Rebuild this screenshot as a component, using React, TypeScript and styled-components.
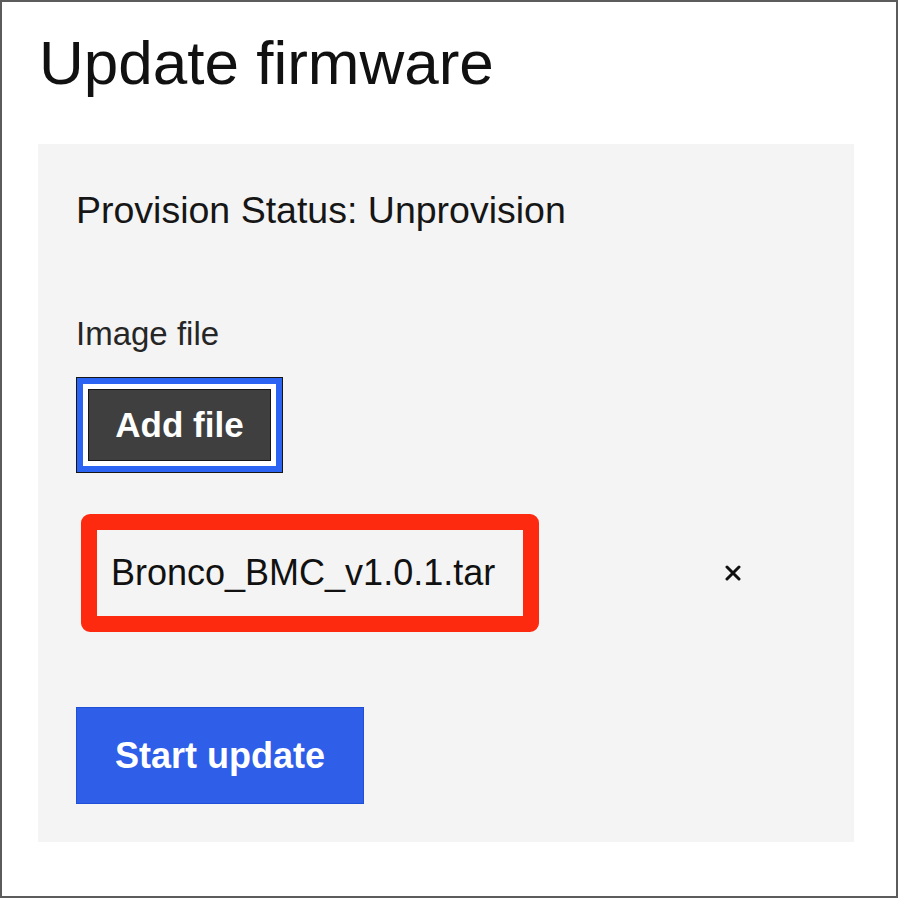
import React from "react";
import styled, { createGlobalStyle } from "styled-components";

const Global = createGlobalStyle`
  html, body { margin: 0; padding: 0; background: #ffffff; }
  body { font-family: "Liberation Sans", Arial, sans-serif; }
  * { box-sizing: border-box; }
`;

const Frame = styled.div`
  width: 898px;
  height: 898px;
  border: 2px solid #5c5c5c;
  background: #ffffff;
  padding: 30px 42px 0 36px;
`;

const Title = styled.h1`
  margin: 0 0 50px 1px;
  font-size: 62px;
  line-height: 62px;
  font-weight: 400;
  color: #111111;
`;

const Panel = styled.section`
  background: #f4f4f4;
  padding: 47px 38px 38px 38px;
`;

const Status = styled.p`
  margin: 0 0 88px 0;
  font-size: 37.5px;
  line-height: 38px;
  color: #161616;
`;

const Label = styled.label`
  display: block;
  margin: 0;
  font-size: 33px;
  line-height: 33px;
  color: #262626;
`;

const FocusRing = styled.span`
  display: flex;
  width: fit-content;
  margin: 28px 0 0 1px;
  border: 6px solid #2b63f3;
  outline: 1px solid #151515;
  padding: 5px;
  background: #ffffff;
`;

const AddButton = styled.button`
  height: 72px;
  width: 183px;
  padding: 0;
  border: 1px solid #151515;
  background: #3f3f3f;
  color: #ffffff;
  font-family: "Liberation Sans", Arial, sans-serif;
  font-weight: 700;
  font-size: 35px;
  cursor: pointer;
`;

const FileRow = styled.div`
  display: flex;
  align-items: center;
  width: 660px;
  margin: 42px 0 0 5px;
`;

const FileBox = styled.div`
  display: flex;
  align-items: center;
  width: 458px;
  height: 118px;
  border: 16px solid #fd2a0f;
  border-radius: 9px;
  padding: 0 14px;
  font-size: 36px;
  color: #111111;
`;

const Remove = styled.button`
  margin-left: auto;
  padding: 0;
  border: 0;
  background: transparent;
  display: flex;
  cursor: pointer;
`;

const StartButton = styled.button`
  display: block;
  margin-top: 75px;
  width: 288px;
  height: 97px;
  border: 1px solid #1f4fd6;
  background: #2f5ee8;
  color: #ffffff;
  font-family: "Liberation Sans", Arial, sans-serif;
  font-weight: 700;
  font-size: 36px;
  padding: 0;
  cursor: pointer;
`;

export default function App() {
  return (
    <>
      <Global />
      <Frame>
        <Title>Update firmware</Title>
        <Panel>
          <Status>Provision Status: Unprovision</Status>
          <Label>Image file</Label>
          <FocusRing>
            <AddButton>Add file</AddButton>
          </FocusRing>
          <FileRow>
            <FileBox>Bronco_BMC_v1.0.1.tar</FileBox>
            <Remove aria-label="Remove file">
              <svg width="16" height="16" viewBox="0 0 16 16">
                <path d="M2 2 L14 14 M14 2 L2 14" stroke="#111" strokeWidth="3" strokeLinecap="round" />
              </svg>
            </Remove>
          </FileRow>
          <StartButton>Start update</StartButton>
        </Panel>
      </Frame>
    </>
  );
}
